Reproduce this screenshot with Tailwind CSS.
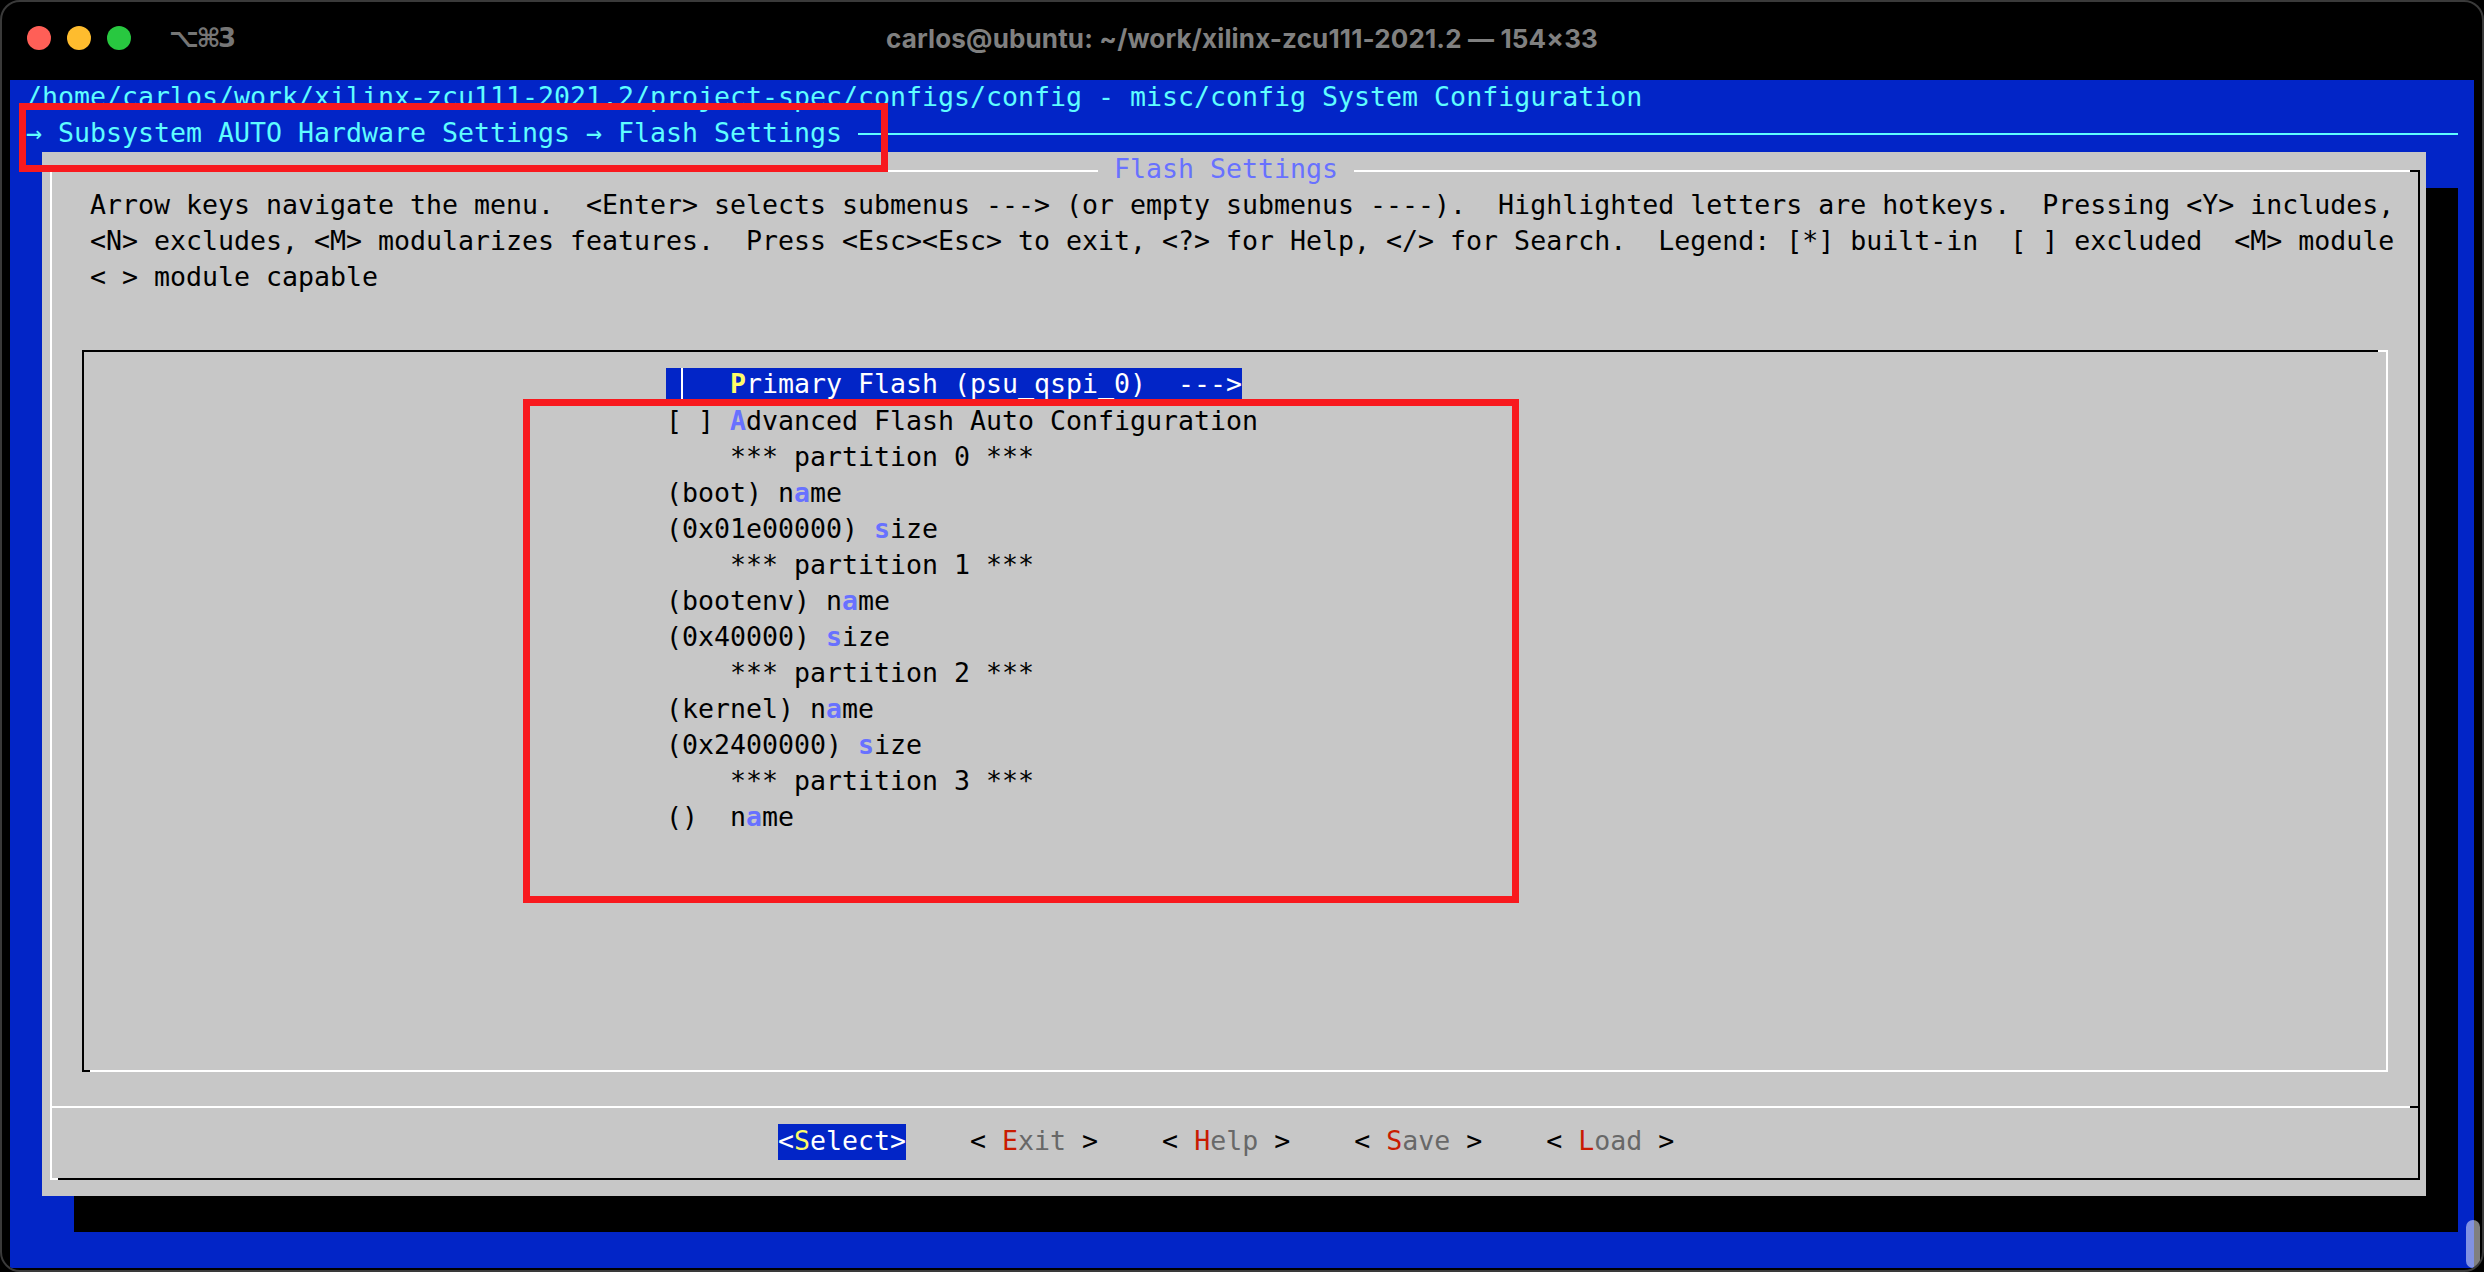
<!DOCTYPE html>
<html lang="en">
<head>
  <meta charset="UTF-8" />
  <title>carlos@ubuntu: ~/work/xilinx-zcu111-2021.2</title>
  <script src="https://cdn.jsdelivr.net/npm/@tailwindcss/browser@4"></script>
</head>
<body class="bg-black overflow-hidden">
  <div class="relative w-[2484px] h-[1272px] bg-black border-2 border-[#3a3a3a] rounded-[20px] overflow-hidden">

    <!-- Title bar -->
    <div class="relative h-[78px] flex items-center pl-[25px] pb-[6px]">
      <div class="flex gap-[16px]">
        <span class="w-6 h-6 rounded-full bg-[#ff5f57]"></span>
        <span class="w-6 h-6 rounded-full bg-[#febc2e]"></span>
        <span class="w-6 h-6 rounded-full bg-[#28c840]"></span>
      </div>
      <span class="ml-[38px] text-[26px] font-bold text-[#767676] font-['DejaVu_Sans',sans-serif] tracking-[-2.5px]">⌥⌘3</span>
      <span class="absolute left-0 right-0 text-center text-[26px] tracking-[0.15px] font-bold text-[#808080] font-['Inter',sans-serif]">carlos@ubuntu: ~/work/xilinx-zcu111-2021.2 — 154×33</span>
    </div>

    <!-- Terminal: every row is 36px, every column 16px -->
    <div class="ml-[8px] w-[2464px] h-[1188px] bg-[#0225c7] font-['DejaVu_Sans_Mono',monospace] text-[26.58px] leading-[34px]">
      <div class="h-9 pl-4 text-[#5ffdff] whitespace-pre">/home/carlos/work/xilinx-zcu111-2021.2/project-spec/configs/config - misc/config System Configuration</div>
      <div class="h-9 pl-4 flex items-start w-[2448px] text-[#5ffdff] whitespace-pre">
        <span>→ Subsystem AUTO Hardware Settings → Flash Settings </span>
        <span class="flex-1 h-[2px] self-center bg-[#5ffdff]"></span>
      </div>

      <!-- Dialog with its shadow -->
      <div class="relative ml-8 w-[2384px] h-[1044px] bg-[#c7c7c7] text-black shadow-[32px_36px_0_#000] pt-[18px] pl-2">
        <div class="relative w-[2370px] h-[1010px] border-t-2 border-l-2 border-t-white border-l-white border-b-2 border-r-2 border-b-black border-r-black pt-4">
          <div class="pl-[38px]">
            <div class="h-9 whitespace-pre">Arrow keys navigate the menu.  &lt;Enter&gt; selects submenus ---&gt; (or empty submenus ----).  Highlighted letters are hotkeys.  Pressing &lt;Y&gt; includes,</div>
            <div class="h-9 whitespace-pre">&lt;N&gt; excludes, &lt;M&gt; modularizes features.  Press &lt;Esc&gt;&lt;Esc&gt; to exit, &lt;?&gt; for Help, &lt;/&gt; for Search.  Legend: [*] built-in  [ ] excluded  &lt;M&gt; module</div>
            <div class="h-9 whitespace-pre">&lt; &gt; module capable</div>
          </div>

          <!-- Menu box -->
          <div class="relative ml-[30px] mt-[54px] w-[2306px] h-[722px] border-t-2 border-l-2 border-t-black border-l-black border-b-2 border-r-2 border-b-white border-r-white pt-4 pl-[582px]">
            <div class="flex w-[576px] h-9 bg-[#0225c7] text-white whitespace-pre leading-[32px]">
              <span class="w-[17px] border-r-2 border-white"></span><span class="pl-[47px]"><span class="font-bold text-[#fffc67]">P</span>rimary Flash (psu_qspi_0)  ---&gt;</span>
            </div>
            <div class="h-9 whitespace-pre">[ ] <span class="font-bold text-[#6871ff]">A</span>dvanced Flash Auto Configuration</div>
            <div class="h-9 whitespace-pre">    *** partition 0 ***</div>
            <div class="h-9 whitespace-pre">(boot) n<span class="font-bold text-[#6871ff]">a</span>me</div>
            <div class="h-9 whitespace-pre">(0x01e00000) <span class="font-bold text-[#6871ff]">s</span>ize</div>
            <div class="h-9 whitespace-pre">    *** partition 1 ***</div>
            <div class="h-9 whitespace-pre">(bootenv) n<span class="font-bold text-[#6871ff]">a</span>me</div>
            <div class="h-9 whitespace-pre">(0x40000) <span class="font-bold text-[#6871ff]">s</span>ize</div>
            <div class="h-9 whitespace-pre">    *** partition 2 ***</div>
            <div class="h-9 whitespace-pre">(kernel) n<span class="font-bold text-[#6871ff]">a</span>me</div>
            <div class="h-9 whitespace-pre">(0x2400000) <span class="font-bold text-[#6871ff]">s</span>ize</div>
            <div class="h-9 whitespace-pre">    *** partition 3 ***</div>
            <div class="h-9 whitespace-pre">()  n<span class="font-bold text-[#6871ff]">a</span>me</div>
            <span class="absolute -top-[2px] -right-[2px] w-[10px] h-[2px] bg-white"></span>
            <span class="absolute -bottom-[2px] -left-[2px] w-2 h-[2px] bg-black"></span>
          </div>

          <!-- Separator and buttons -->
          <div class="relative mt-[34px] h-[2px] bg-white">
            <span class="absolute top-0 right-0 w-2 h-[2px] bg-black"></span>
          </div>
          <div class="mt-4 ml-[726px] flex gap-16 h-9 whitespace-pre">
            <span class="bg-[#0225c7] text-white">&lt;<span class="text-[#fffc67]">S</span>elect&gt;</span>
            <span>&lt; <span class="text-[#c91b00]">E</span><span class="text-[#686868]">xit</span> &gt;</span>
            <span>&lt; <span class="text-[#c91b00]">H</span><span class="text-[#686868]">elp</span> &gt;</span>
            <span>&lt; <span class="text-[#c91b00]">S</span><span class="text-[#686868]">ave</span> &gt;</span>
            <span>&lt; <span class="text-[#c91b00]">L</span><span class="text-[#686868]">oad</span> &gt;</span>
          </div>

          <span class="absolute -top-[2px] -right-[2px] w-[10px] h-[2px] bg-black"></span>
          <span class="absolute -bottom-[2px] -left-[2px] w-2 h-[2px] bg-white"></span>
        </div>
        <span class="absolute top-0 left-[1056px] h-9 bg-[#c7c7c7] text-[#6871ff] whitespace-pre"> Flash Settings </span>
      </div>
    </div>

    <!-- Scrollbar thumb -->
    <div class="absolute left-[2464px] top-[1218px] w-[14px] h-[48px] rounded-full bg-white/50"></div>

    <!-- Red annotation boxes -->
    <div class="absolute left-[17px] top-[101px] w-[869px] h-[69px] border-[7px] border-[#f8191e]"></div>
    <div class="absolute left-[521px] top-[397px] w-[996px] h-[504px] border-[7px] border-[#f8191e]"></div>
  </div>
</body>
</html>
